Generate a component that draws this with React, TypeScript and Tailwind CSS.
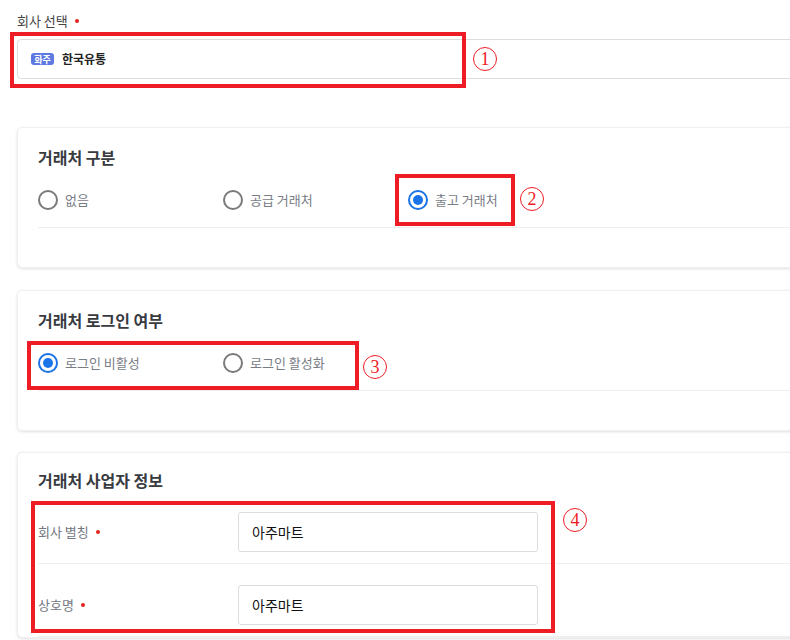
import React from "react";

const font = { fontFamily: '"Noto Sans CJK KR", "Noto Sans", sans-serif' };

function Dot() {
  return <span className="ml-[7px] inline-block h-[4px] w-[4px] rounded-full bg-[#e2231a]" />;
}

function Radio({ label, checked }: { label: string; checked?: boolean }) {
  return (
    <div className="flex w-[185px] items-center gap-[7px]">
      <span
        className={
          "flex h-[20px] w-[20px] items-center justify-center rounded-full border-2 " +
          (checked ? "border-[#1a73e8]" : "border-[#7a7a7a]")
        }
      >
        {checked && <span className="h-[10px] w-[10px] rounded-full bg-[#1a73e8]" />}
      </span>
      <span className="text-[13px] text-[#787c85]">{label}</span>
    </div>
  );
}

function RadioCard({ title, options, selected }: { title: string; options: string[]; selected: number }) {
  return (
    <div className="rounded-[5px] border border-[#f0f0f0] bg-white pb-[39px] pl-[20px] pt-[18px] shadow-[0_1px_3px_rgba(0,0,0,0.12)]">
      <div className="h-[22px] text-[16px] font-bold leading-[22px] text-[#383b40]">{title}</div>
      <div className="mt-[12px] border-b border-[#eeeeee] pb-[7px]">
        <div className="flex h-[40px] items-center">
          {options.map((o, i) => (
            <Radio key={o} label={o} checked={i === selected} />
          ))}
        </div>
      </div>
    </div>
  );
}

function Field({ label, value }: { label: string; value: string }) {
  return (
    <div className="flex items-center border-b border-[#eeeeee] pb-[11px] pt-[21px]">
      <div className="flex w-[200px] items-center text-[13px] text-[#73777f]">
        {label}
        <Dot />
      </div>
      <div className="flex h-[40px] w-[300px] items-center rounded-[3px] border border-[#dddddd] pl-[13px] text-[14px] text-[#111]">
        {value}
      </div>
    </div>
  );
}

function Mark({ n, left, top }: { n: string; left: number; top: number }) {
  return (
    <div
      className="absolute flex h-[24px] w-[24px] items-center justify-center rounded-full border-[1.5px] border-[#ee1c25] text-[18px] leading-none text-[#ee1c25]"
      style={{ left, top, fontFamily: '"Liberation Serif", "DejaVu Serif", serif' }}
    >
      {n}
    </div>
  );
}

function Box({ left, top, width, height }: { left: number; top: number; width: number; height: number }) {
  return (
    <div
      className="pointer-events-none absolute border-4 border-[#ee1c25]"
      style={{ left, top, width, height }}
    />
  );
}

export default function App() {
  return (
    <div className="relative h-[640px] w-[790px] overflow-hidden bg-white" style={font}>
      <div className="w-[840px] pl-[17px]">
        <div className="flex h-[31px] items-center pt-[11px] text-[13px] text-[#444]">
          회사 선택
          <Dot />
        </div>
        <div className="mt-[8px] flex h-[40px] items-center rounded-[4px] border border-[#dedede] pl-[13px]">
          <span className="flex h-[12px] w-[23px] items-center justify-center rounded-[3px] bg-[#5b79e0] text-[9px] font-bold leading-none text-white">
            화주
          </span>
          <span className="ml-[8px] text-[12px] font-bold text-[#222]">한국유통</span>
        </div>

        <div className="mt-[48px]">
          <RadioCard title="거래처 구분" options={["없음", "공급 거래처", "출고 거래처"]} selected={2} />
          <div className="mt-[22px]">
            <RadioCard title="거래처 로그인 여부" options={["로그인 비활성", "로그인 활성화"]} selected={0} />
          </div>
          <div className="mt-[21px] rounded-[5px] border border-[#f0f0f0] bg-white pl-[20px] pt-[16px] shadow-[0_1px_3px_rgba(0,0,0,0.12)]">
            <div className="h-[22px] text-[16px] font-bold leading-[22px] text-[#383b40]">거래처 사업자 정보</div>
            <Field label="회사 별칭" value="아주마트" />
            <Field label="상호명" value="아주마트" />
          </div>
        </div>
      </div>

      <Box left={10} top={32} width={456} height={56} />
      <Mark n="1" left={473} top={47} />
      <Box left={395} top={174} width={120} height={52} />
      <Mark n="2" left={520} top={187} />
      <Box left={27} top={341} width={332} height={49} />
      <Mark n="3" left={363} top={355} />
      <Box left={31} top={501} width={524} height={132} />
      <Mark n="4" left={563} top={508} />
    </div>
  );
}
